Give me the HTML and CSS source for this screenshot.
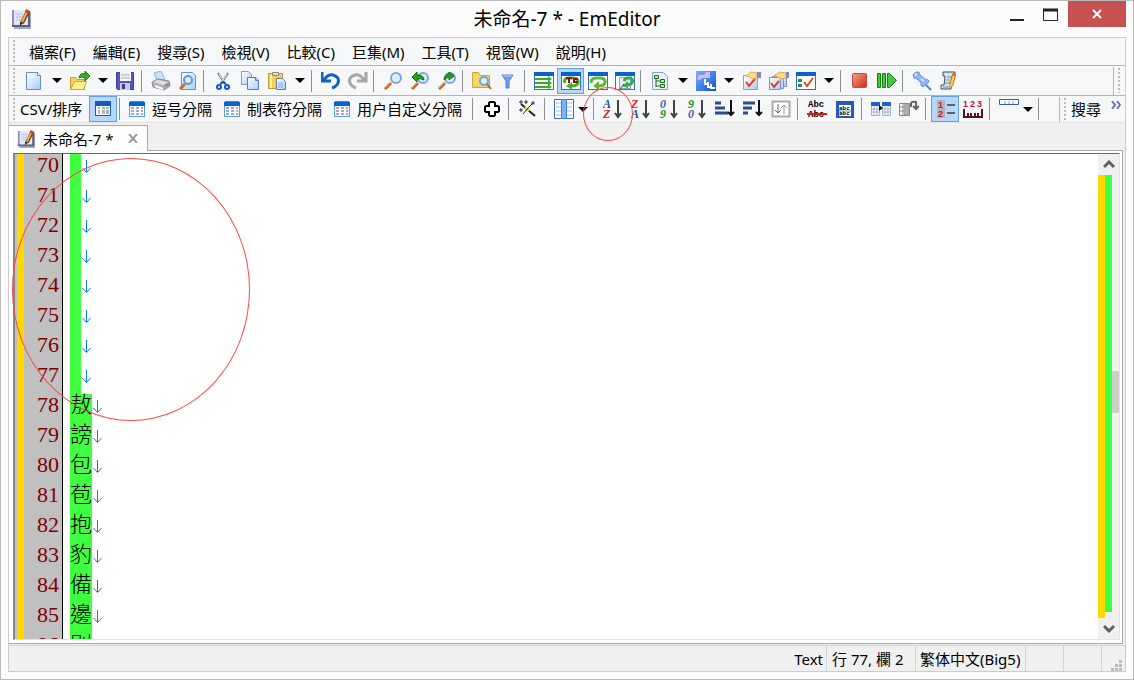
FILE: index.html
```
<!DOCTYPE html>
<html lang="zh-Hant">
<head>
  <meta charset="UTF-8">
  <meta name="viewport" content="width=device-width, initial-scale=1.0">
  <title>未命名-7 * - EmEditor</title>
  <link rel="stylesheet" href="styles.css">
</head>
<body>
  <!-- shared symbols -->
  <svg class="defs" aria-hidden="true">
    <defs>
      <linearGradient id="paper" x1="0" y1="0" x2="1" y2="1"><stop offset="0" stop-color="#fff"/><stop offset="1" stop-color="#a9ccf5"/></linearGradient>
      <linearGradient id="bluebox" x1="0" y1="0" x2="1" y2="1"><stop offset="0" stop-color="#7db2ff"/><stop offset="1" stop-color="#0d50dc"/></linearGradient>
      <linearGradient id="redbox" x1="0" y1="0" x2="1" y2="1"><stop offset="0" stop-color="#f3a18c"/><stop offset="1" stop-color="#cf2a10"/></linearGradient>
    </defs>
    <symbol id="note" viewBox="0 0 20 20">
      <path d="M3 3h17v17H3z" fill="#a5a5ad"/>
      <path d="M1 1h16v17H1z" fill="#e4e6fa"/>
      <path d="M2 1v17" stroke="#8f8fc4" stroke-width="2"/>
      <path d="M1 17h17V2" fill="none" stroke="#5c5c90" stroke-width="2"/>
      <path d="M5 5h7M5 8h6M5 11h5" stroke="#b9bee2"/>
      <path d="M17 2l-6 12" stroke="#7a4418" stroke-width="4"/>
      <path d="M16 3l-5 10" stroke="#f5b43c" stroke-width="2"/>
      <path d="M15 0l4 2-1 3-4-2z" fill="#c8402c"/>
      <path d="M9 13l3 1-3 3z" fill="#222"/>
    </symbol>
    <symbol id="table" viewBox="0 0 16 16">
      <path d="M0 1h16v15H0z" fill="#5f9be0"/>
      <path d="M1 5h14v10H1z" fill="#f4f9ff"/>
      <path d="M0 1h16v4H0z" fill="#0a62d0"/>
      <path d="M1 0h14v1H1z" fill="#2f86e4"/>
      <path d="M2 6h3v2H2zM7 6h3v2H7zM12 6h2v2h-2zM2 9h3v2H2zM7 9h3v2H7zM12 9h2v2h-2zM2 12h3v2H2zM7 12h3v2H7zM12 12h2v2h-2z" fill="#a8acb6"/>
    </symbol>
    <symbol id="lens" viewBox="0 0 20 20">
      <path d="M2 18l6-6" stroke="#b8682c" stroke-width="3"/>
      <path d="M2 17l6-6" stroke="#f0a060"/>
      <circle cx="13" cy="7" r="5" fill="#d8efff" stroke="#7ba7d8" stroke-width="2"/>
      <path d="M10 6q1-2 3-2" stroke="#fff" fill="none"/>
    </symbol>
    <symbol id="win" viewBox="0 0 20 20">
      <path d="M0 1h20v18H0z" fill="#2f74c8"/>
      <path d="M0 1h20v4H0z" fill="#0a60cc"/>
      <path d="M1 5h18v13H1z" fill="#fff"/>
    </symbol>
    <symbol id="down" viewBox="0 0 10 5"><path d="M0 0h10L5 5z"/></symbol>
    <symbol id="eol" viewBox="0 0 9 13"><path d="M4.500 0v12M.5 8l4 4.500 4-4.500" fill="none" stroke="#0a80f0"/></symbol>
  </svg>

  <header class="titlebar">
    <svg class="app-icon"><use href="#note"/></svg>
    <h1>未命名-7 * - EmEditor</h1>
    <div class="window-buttons">
      <button aria-label="最小化"><svg width="16" height="16"><path d="M1 14h14" stroke="#222" stroke-width="2"/></svg></button>
      <button aria-label="最大化"><svg width="16" height="16"><path d="M.5 3.500h14v11H.5z" fill="none" stroke="#222"/><path d="M0 4h15" stroke="#222" stroke-width="3"/></svg></button>
      <button class="close" aria-label="關閉"><svg width="12" height="10"><path d="M2 1l8 8M10 1L2 9" stroke="#fff" stroke-width="2"/></svg></button>
    </div>
  </header>

  <main class="frame">
    <nav class="bar menubar">
      <span class="grip"></span>
      <button>檔案(F)</button>
      <button>編輯(E)</button>
      <button>搜尋(S)</button>
      <button>檢視(V)</button>
      <button>比較(C)</button>
      <button>巨集(M)</button>
      <button>工具(T)</button>
      <button>視窗(W)</button>
      <button>說明(H)</button>
    </nav>

    <div class="bar toolbar" role="toolbar" aria-label="標準">
      <span class="grip"></span>
      <button aria-label="新增"><svg viewBox="0 0 20 20"><path d="M2.500 1.500h11l3 3v14h-14z" fill="url(#paper)" stroke="#6c8cc8"/><path d="M13.500 1.500v3h3" fill="#fff" stroke="#6c8cc8"/></svg></button>
      <button class="more" aria-label="新增選項"><svg><use href="#down"/></svg></button>
      <button aria-label="開啟"><svg viewBox="0 0 20 20"><path d="M.5 18.500v-12h5l2 2h7v10z" fill="#f3d060" stroke="#c89a30"/><path d="M.5 18.500l4-8h12l-3 8z" fill="#fff08a" stroke="#d0a438"/><path d="M9 7q1-6 6-4V0l5 5-5 5V7q-3-2-6 0z" fill="#3fae2c" stroke="#1c7c10"/></svg></button>
      <button class="more" aria-label="最近的檔案"><svg><use href="#down"/></svg></button>
      <button aria-label="儲存"><svg viewBox="0 0 20 20"><path d="M.5 1.500h17v17h-16l-1-1z" fill="#5555c0" stroke="#40409c"/><path d="M4 1h11v9H4z" fill="#f4f4f4"/><path d="M5 4h9M5 7h9" stroke="#aaa"/><path d="M4 12h10v7H4z" fill="#c9c9d8"/><path d="M6 13h3v5H6z" fill="#3a3a90"/></svg></button>
      <span class="sep"></span>
      <button aria-label="列印"><svg viewBox="0 0 20 20"><path d="M3 2l7-2 4 8-8 2z" fill="#c8e2fb" stroke="#8db2dc"/><path d="M1 11l6-3 11 2 1 5-6 4-11-3z" fill="#b0b0b0" stroke="#8c8c8c"/><path d="M2 11l5-2 10 2-5 3z" fill="#e0e0e0"/><path d="M4 15l8 3" stroke="#fff" stroke-width="2"/><path d="M14 15l4-2" stroke="#666"/></svg></button>
      <button aria-label="預覽列印"><svg viewBox="0 0 20 20"><path d="M3.500 1.500h11l3 3v14h-14z" fill="url(#paper)" stroke="#6c90d0"/><path d="M2 18l5-5" stroke="#c0703a" stroke-width="3"/><circle cx="10" cy="9" r="4" fill="#d2eeff" stroke="#6597d0" stroke-width="2"/></svg></button>
      <span class="sep"></span>
      <button aria-label="剪下"><svg viewBox="0 0 20 20"><path d="M5 2l7 11M15 2L8 13" stroke="#66788c" stroke-width="2"/><path d="M6 3l5 8M14 3l-5 8" stroke="#dde4ea"/><circle cx="6" cy="16" r="2" fill="none" stroke="#1656b8" stroke-width="2"/><circle cx="14" cy="16" r="2" fill="none" stroke="#1656b8" stroke-width="2"/><path d="M7 13l3-2 3 2" stroke="#1656b8" stroke-width="2" fill="none"/></svg></button>
      <button aria-label="複製"><svg viewBox="0 0 20 20"><path d="M1.500.5h7l3 3v10h-10z" fill="url(#paper)" stroke="#7c9cd4"/><path d="M7.500 6.500h8l3 3v9h-11z" fill="url(#paper)" stroke="#6078bc"/><path d="M15.500 6.500v3h3" fill="none" stroke="#6078bc"/></svg></button>
      <button aria-label="貼上"><svg viewBox="0 0 20 20"><path d="M1.500 2.500h14v15h-14z" fill="#f6d04c" stroke="#c09a30"/><path d="M3 4h2v13H3z" fill="#fff0a0"/><path d="M5.500 1.500h6v3h-6z" fill="#ddd" stroke="#888"/><path d="M9.500 7.500h6l3 3v8h-9z" fill="url(#paper)" stroke="#6078bc"/><path d="M11 12h5M11 14h5M11 16h5" stroke="#85aee0"/></svg></button>
      <button class="more" aria-label="貼上選項"><svg><use href="#down"/></svg></button>
      <span class="sep"></span>
      <button aria-label="復原"><svg viewBox="0 0 20 20"><path d="M1 1v9h9M3 9q4-6 9-5 7 2 5 8-1 3-6 5" fill="none" stroke="#1262c4" stroke-width="3"/></svg></button>
      <button aria-label="取消復原"><svg viewBox="0 0 20 20"><path d="M18 1v9H9M16 9q-4-6-9-5-7 2-5 8 1 3 6 5" fill="none" stroke="#a6a6a6" stroke-width="3"/></svg></button>
      <span class="sep"></span>
      <button aria-label="尋找"><svg><use href="#lens"/></svg></button>
      <button aria-label="尋找上一個"><svg viewBox="0 0 20 20"><use href="#lens" width="20" height="20"/><path d="M2 6l5-5v3q7 0 7 5-3-2-7-1v3z" fill="#28a020" stroke="#0e6c0c"/></svg></button>
      <button aria-label="尋找下一個"><svg viewBox="0 0 20 20"><use href="#lens" width="20" height="20"/><path d="M7 9q0-5 5-6V1l5 4-5 4V6q-3 1-5 3z" fill="#28a020" stroke="#0e6c0c"/></svg></button>
      <span class="sep"></span>
      <button aria-label="在檔案中尋找"><svg viewBox="0 0 20 20"><path d="M.5 16.500v-15h6l2 3h9v12z" fill="#f6d468" stroke="#d0a43c"/><circle cx="12" cy="10" r="4" fill="#d8f0ff" stroke="#7aa4d4" stroke-width="2"/><path d="M15 13l4 5" stroke="#b8682c" stroke-width="2"/></svg></button>
      <button aria-label="篩選"><svg viewBox="0 0 20 20"><path d="M3 4h11l-4 6v7H7v-7z" fill="#6f9cf0" stroke="#5080d8"/><path d="M4 5h9" stroke="#b9d2ff"/></svg></button>
      <span class="sep"></span>
      <button aria-label="不換行"><svg viewBox="0 0 20 20"><use href="#win" width="20" height="20"/><path d="M1 8h14M1 12h14M1 16h14" stroke="#3cac28" stroke-width="2"/><path d="M14 5l4 3-4 3zM14 9l4 3-4 3zM14 13l4 3-4 2z" fill="#3cac28"/></svg></button>
      <button class="on" aria-label="依字數換行"><svg viewBox="0 0 20 20"><use href="#win" width="20" height="20"/><path d="M4 12q-2-5 4-5h5q5 1 4 5-1 3-6 3" fill="none" stroke="#44b420" stroke-width="3"/><path d="M11 11v8l-6-4z" fill="#44b420"/><path d="M5 6h6v2H9v4H7V8H5zM12 7h5v2h-3v1h3v2h-5z" fill="#8c1020"/></svg></button>
      <button aria-label="依視窗換行"><svg viewBox="0 0 20 20"><use href="#win" width="20" height="20"/><path d="M3 12q0-5 5-5h5q5 1 4 5-1 3-6 3" fill="none" stroke="#58bc30" stroke-width="3"/><path d="M11 10v9l-6-4z" fill="#58bc30"/></svg></button>
      <button aria-label="依頁面換行"><svg viewBox="0 0 20 20"><use href="#win" width="20" height="20"/><path d="M4.500 6.500h11v11h-11z" fill="#e6eefc" stroke="#90a4cc"/><path d="M9 10q1-3 4-3h3q3 3 0 6l-3 1" fill="none" stroke="#3ca848" stroke-width="3"/><path d="M13 10v7l-6-2z" fill="#3ca848"/><path d="M5 18l4-5" stroke="#444"/></svg></button>
      <span class="sep"></span>
      <button aria-label="大綱"><svg viewBox="0 0 20 20"><path d="M2.500 1.500h11l4 4v13h-15z" fill="#e8f0fa" stroke="#8ca0c4"/><path d="M6 5v11M6 10h4M6 15h4" stroke="#1c6c1c"/><path d="M4.500 4.500h4v3h-4zM10.500 8.500h4v3h-4zM10.500 13.500h4v3h-4z" fill="#b5f09c" stroke="#1c6c1c"/></svg></button>
      <button class="more" aria-label="大綱選項"><svg><use href="#down"/></svg></button>
      <button aria-label="外掛程式"><svg viewBox="0 0 20 20"><path d="M0 0h20v20H0z" fill="url(#bluebox)"/><path d="M1 8l2-4h5l2-3h4v6H6L4 9z" fill="#d9b8f4"/><path d="M9 8v5h3M12 11v5h3M15 13v4h4" stroke="#fff" stroke-width="2" fill="none"/></svg></button>
      <button class="more" aria-label="外掛程式選項"><svg><use href="#down"/></svg></button>
      <button aria-label="工具內容"><svg viewBox="0 0 20 20"><path d="M1.500 4.500h14v14h-14z" fill="url(#paper)" stroke="#8ca0dc"/><path d="M4 11l3 4 6-7" stroke="#e04020" stroke-width="2" fill="none"/><path d="M4 5l5-4 6 1v5l-4 1-3-2z" fill="#ffdc8c" stroke="#dcac50"/><path d="M15 1h4v6h-4z" fill="#8088d8"/></svg></button>
      <button aria-label="所有設定內容"><svg viewBox="0 0 20 20"><path d="M6.500 3.500h11v12h-11z" fill="url(#paper)" stroke="#7a90d0"/><path d="M3.500 5.500h11v12h-11z" fill="url(#paper)" stroke="#7a90d0"/><path d="M.5 6.500h11v12H.5z" fill="url(#paper)" stroke="#7a90d0"/><path d="M2 12l3 4 5-6" stroke="#e04020" stroke-width="2" fill="none"/><path d="M5 5l6-4 6 1v5l-5 1-3-2z" fill="#ffdc8c" stroke="#dcac50"/><path d="M17 1h3v6h-3z" fill="#8088d8"/></svg></button>
      <button aria-label="自訂"><svg viewBox="0 0 20 20"><use href="#win" width="20" height="20"/><path d="M2 8h4v3H2zM2 13h4v3H2z" fill="#189848"/><path d="M8 11l3 4 6-8" stroke="#e84818" stroke-width="2" fill="none"/></svg></button>
      <button class="more" aria-label="自訂選項"><svg><use href="#down"/></svg></button>
      <span class="sep"></span>
      <button aria-label="停止錄製"><svg viewBox="0 0 20 20"><rect x="2.500" y="2.500" width="14" height="14" rx="1" fill="url(#redbox)" stroke="#d04830"/></svg></button>
      <button aria-label="執行巨集"><svg viewBox="0 0 20 20"><path d="M.5 2.500h3v14h-3zM5.500 2.500h3v14h-3zM10.500 2.500h2l7 7-7 7h-2z" fill="#46c83c" stroke="#0c840c"/></svg></button>
      <span class="sep"></span>
      <button aria-label="釘選"><svg viewBox="0 0 20 20"><path d="M12 12l7 7" stroke="#5a84d8" stroke-width="2"/><path d="M1 4q2-4 6-3l1 3 5 4q4 0 4 3l-6 5q-3-1-2-4L5 8Q1 8 1 4z" fill="#8fb4f8" stroke="#6a94e4"/><path d="M3 4l2-1M9 8l3 2" stroke="#dce8ff" stroke-width="2"/></svg></button>
      <button aria-label="巨集指令碼"><svg viewBox="0 0 20 20"><path d="M4 1h12v4h-3l-1 13H2v-4h3l1-9H4z" fill="#d4e6ea" stroke="#3c5058"/><path d="M8 6h4M7 9h4M6 12h5M4 16h7" stroke="#6c8890"/><path d="M15 4l-3 11" stroke="#c47818" stroke-width="4"/><path d="M15 4l-3 11" stroke="#ffd058" stroke-width="2"/><path d="M14 2l3 1-1 2-3-1z" fill="#e05030"/></svg></button>
      <span class="band-end"></span>
      <span class="grip"></span>
    </div>

    <div class="bar toolbar csv" role="toolbar" aria-label="CSV/排序">
      <span class="grip"></span>
      <span class="label">CSV/排序</span>
      <button class="on" aria-label="標準模式"><svg viewBox="0 0 20 20"><path d="M2 2h16v15H2z" fill="#1c58c0"/><path d="M3 7h14v9H3z" fill="#f4f8ff"/><path d="M5 9h2M9 9h3M13 9h3M5 12h2M9 12h3M13 12h3M5 14h2M9 14h3M13 14h3" stroke="#707078"/></svg></button>
      <span class="sep"></span>
      <button class="text"><svg><use href="#table"/></svg>逗号分隔</button>
      <button class="text"><svg><use href="#table"/></svg>制表符分隔</button>
      <button class="text"><svg><use href="#table"/></svg>用户自定义分隔</button>
      <span class="sep"></span>
      <button aria-label="選取範圍"><svg viewBox="0 0 20 20"><path d="M7 4l1-1h4l1 1v3h3l1 1v4l-1 1h-3v3l-1 1H8l-1-1v-3H4l-1-1V8l1-1h3z" fill="#fff" stroke="#000" stroke-width="2"/></svg></button>
      <span class="sep"></span>
      <button aria-label="調整分隔符"><svg viewBox="0 0 20 20"><path d="M3 5l14 12" stroke="#222" stroke-width="2"/><path d="M7 8l4 4" stroke="#e8dc30" stroke-width="2"/><path d="M3 1v4M1 3h4M8 1v4M6 3h4M15 2v4M13 4h4M3 9v4M1 11h4M5 15l5-6 5-5" stroke="#333"/></svg></button>
      <span class="sep"></span>
      <button aria-label="管理欄"><svg viewBox="0 0 20 20"><path d="M.5.5h19v19H.5z" fill="#fff" stroke="#3470b8"/><path d="M2 4h5M13 4h5M2 8h5M13 8h5M2 12h5M13 12h5M2 16h5M13 16h5" stroke="#a4bcdc"/><path d="M7 0h6v20H7z" fill="#4480e0"/><path d="M8 1h4v18H8z" fill="#7cb0fa"/></svg></button>
      <button class="more" aria-label="選取欄"><svg><use href="#down"/></svg></button>
      <span class="sep"></span>
      <button aria-label="由 A 到 Z 排序"><svg viewBox="0 0 20 20"><text x="0" y="9" fill="#1c5490">A</text><text x="0" y="19" fill="#c82838">Z</text><path d="M15 1v17M12 14l3 4 3-4" stroke="#444" stroke-width="2" fill="none"/></svg></button>
      <button aria-label="由 Z 到 A 排序"><svg viewBox="0 0 20 20"><text x="0" y="9" fill="#c82838">Z</text><text x="0" y="19" fill="#1c5490">A</text><path d="M15 1v17M12 14l3 4 3-4" stroke="#444" stroke-width="2" fill="none"/></svg></button>
      <button aria-label="由小到大排序"><svg viewBox="0 0 20 20"><text x="1" y="9" fill="#5450b0">0</text><text x="1" y="19" fill="#289020">9</text><path d="M15 1v17M12 14l3 4 3-4" stroke="#444" stroke-width="2" fill="none"/></svg></button>
      <button aria-label="由大到小排序"><svg viewBox="0 0 20 20"><text x="1" y="9" fill="#289020">9</text><text x="1" y="19" fill="#5450b0">0</text><path d="M15 1v17M12 14l3 4 3-4" stroke="#444" stroke-width="2" fill="none"/></svg></button>
      <button aria-label="由短到長排序"><svg viewBox="0 0 20 20"><path d="M0 4h6M0 9h10M0 14h13" stroke="#304c88" stroke-width="3"/><path d="M16 1v15M13 13l3 3 3-3" stroke="#111" stroke-width="2" fill="none"/></svg></button>
      <button aria-label="由長到短排序"><svg viewBox="0 0 20 20"><path d="M0 4h12M0 9h9M0 14h5" stroke="#304c88" stroke-width="3"/><path d="M16 1v15M13 13l3 3 3-3" stroke="#111" stroke-width="2" fill="none"/></svg></button>
      <button aria-label="反轉順序"><svg viewBox="0 0 20 20"><path d="M1.500 2.500h17v15h-17z" fill="#fff" stroke="#aaa" stroke-width="2"/><path d="M7 5v9M4 11l3 3 3-3" stroke="#666" fill="none"/><path d="M13 15V6M10 9l3-3 3 3" stroke="#999" fill="none"/></svg></button>
      <span class="sep"></span>
      <button aria-label="刪除重複的行"><svg class="abc" viewBox="0 0 20 20"><text x="1" y="8">Abc</text><text x="1" y="18">Abc</text><path d="M0 15h20" stroke="#e81010" stroke-width="2"/></svg></button>
      <button aria-label="書籤重複的行"><svg class="abc small" viewBox="0 0 20 20"><path d="M1 2h18v17H1z" fill="#2458c0"/><path d="M4 6h12v11H4z" fill="#fff"/><text x="4" y="11">abc</text><text x="4" y="16">abc</text><path d="M4 12h12" stroke="#38a8d8"/></svg></button>
      <span class="sep"></span>
      <button aria-label="合併 CSV"><svg viewBox="0 0 20 20"><path d="M.5 3.500h8v13h-8zM11.500 3.500h8v13h-8z" fill="#fff" stroke="#98b4dc"/><path d="M0 3h9v4H0zM11 3h9v4h-9z" fill="#1c60c8"/><path d="M1 10h7M1 13h7M12 10h7M12 13h7M3 7v9M6 7v9M14 7v9M17 7v9" stroke="#a0acd0"/><path d="M8 6l4 3-4 3z" fill="#111"/></svg></button>
      <button aria-label="轉換 CSV"><svg viewBox="0 0 20 20"><path d="M.5 4.500h10v12H.5z" fill="#fff" stroke="#888"/><path d="M0 8h11M0 12h11M4 4v12" stroke="#888"/><path d="M5 5h5v11H5z" fill="#aaa"/><path d="M12 8V4q1-2 5-1v6M14 7l3 3 3-3" fill="none" stroke="#666" stroke-width="2"/></svg></button>
      <span class="sep"></span>
      <button class="on" aria-label="行號"><svg class="num" viewBox="0 0 20 20"><path d="M2 1h8v18H2z" fill="#b8b0b4"/><text x="3" y="9">1</text><text x="3" y="18">2</text><path d="M12 6h8M12 14h8" stroke="#606068" stroke-width="2"/></svg></button>
      <button aria-label="尺規"><svg class="num" viewBox="0 0 20 20"><text x="0" y="8">1</text><text x="7" y="8">2</text><text x="14" y="8">3</text><path d="M1 10v8h18v-8M5 14v4M8 14v4M12 14v4M15 14v4" fill="none" stroke="#601018" stroke-width="2"/></svg></button>
      <span class="sep"></span>
      <button aria-label="標題列"><svg viewBox="0 0 20 20"><path d="M.5.5h19v5H.5z" fill="#fff" stroke="#2c60c0"/><path d="M6 2v3M10 2v3M14 2v3" stroke="#8098c0"/></svg></button>
      <button class="more" aria-label="標題選項"><svg><use href="#down"/></svg></button>
      <span class="sep"></span>
      <span class="band-end"></span>
      <span class="grip"></span>
      <button class="search">搜尋</button>
      <button class="chevron" aria-label="更多"><svg viewBox="0 0 10 8"><path d="M1 0l3 4-3 4M6 0l3 4-3 4" fill="none" stroke="#7070b8" stroke-width="2"/></svg></button>
    </div>

    <div class="tabs">
      <div class="tab">
        <svg class="tab-icon"><use href="#note"/></svg>
        <a href="#doc">未命名-7 *</a>
        <button aria-label="關閉索引標籤"><svg width="10" height="9"><path d="M1 0l8 9M9 0L1 9" stroke="#999" stroke-width="2"/></svg></button>
      </div>
    </div>

    <section class="pane">
      <div class="editor">
        <div class="lines" id="doc">
          <div class="line"><span class="no">70</span><span class="sel"></span><svg><use href="#eol"/></svg></div>
          <div class="line"><span class="no">71</span><span class="sel"></span><svg><use href="#eol"/></svg></div>
          <div class="line"><span class="no">72</span><span class="sel"></span><svg><use href="#eol"/></svg></div>
          <div class="line"><span class="no">73</span><span class="sel"></span><svg><use href="#eol"/></svg></div>
          <div class="line"><span class="no">74</span><span class="sel"></span><svg><use href="#eol"/></svg></div>
          <div class="line"><span class="no">75</span><span class="sel"></span><svg><use href="#eol"/></svg></div>
          <div class="line"><span class="no">76</span><span class="sel"></span><svg><use href="#eol"/></svg></div>
          <div class="line"><span class="no">77</span><span class="sel"></span><svg><use href="#eol"/></svg></div>
          <div class="line"><span class="no">78</span><span class="sel">敖</span><svg><use href="#eol"/></svg></div>
          <div class="line"><span class="no">79</span><span class="sel">謗</span><svg><use href="#eol"/></svg></div>
          <div class="line"><span class="no">80</span><span class="sel">包</span><svg><use href="#eol"/></svg></div>
          <div class="line"><span class="no">81</span><span class="sel">苞</span><svg><use href="#eol"/></svg></div>
          <div class="line"><span class="no">82</span><span class="sel">抱</span><svg><use href="#eol"/></svg></div>
          <div class="line"><span class="no">83</span><span class="sel">豹</span><svg><use href="#eol"/></svg></div>
          <div class="line"><span class="no">84</span><span class="sel">備</span><svg><use href="#eol"/></svg></div>
          <div class="line"><span class="no">85</span><span class="sel">邊</span><svg><use href="#eol"/></svg></div>
          <div class="line"><span class="no">86</span><span class="sel">別</span><svg><use href="#eol"/></svg></div>
        </div>
        <div class="scrollbar">
          <button aria-label="向上捲動"><svg width="12" height="9"><path d="M1 7l5-5 5 5" fill="none" stroke="#606060" stroke-width="3"/></svg></button>
          <div class="track">
            <span class="changed"></span>
            <span class="selected"></span>
            <span class="thumb"></span>
          </div>
          <button aria-label="向下捲動"><svg width="12" height="9"><path d="M1 2l5 5 5-5" fill="none" stroke="#606060" stroke-width="3"/></svg></button>
        </div>
      </div>
    </section>

    <footer class="status">
      <span>Text</span>
      <span class="pos">行 77, 欄 2</span>
      <span class="enc">繁体中文(Big5)</span>
      <span class="empty"></span>
      <span class="empty"></span>
      <span class="size"><svg width="11" height="11"><path d="M8 0h3v3H8zM4 4h3v3H4zM8 4h3v3H8zM0 8h3v3H0zM4 8h3v3H4zM8 8h3v3H8z" fill="#bbb"/></svg></span>
    </footer>
  </main>

  <div class="mark mark-sort"></div>
  <div class="mark mark-lines"></div>
</body>
</html>
```
FILE: styles.css
```
* {
  box-sizing: border-box;
}
body {
  position: relative;
  display: flex;
  flex-direction: column;
  height: 100vh;
  margin: 0;
  padding: 0 7px 7px;
  border: 1px solid #bbb;
  background: #fcfcfc;
  color: #000;
  font: 15px/20px "Noto Sans", "Noto Sans CJK TC", sans-serif;
  overflow: hidden;
}
button {
  display: flex;
  align-items: center;
  justify-content: center;
  margin: 0;
  padding: 0;
  border: 0;
  background: none;
  color: inherit;
  font: inherit;
  white-space: nowrap;
}
svg {
  display: block;
  flex: none;
}
.defs {
  position: absolute;
  width: 0;
  height: 0;
}

/* title bar */
.titlebar {
  display: grid;
  grid-template-columns: 1fr auto 1fr;
  height: 36px;
  flex: none;
}
.app-icon {
  width: 20px;
  height: 20px;
  margin: 8px 3px;
}
h1 {
  margin: 0;
  font-size: 19px;
  font-weight: 400;
  line-height: 36px;
}
.window-buttons {
  display: flex;
  justify-content: flex-end;
  height: 26px;
}
.window-buttons button {
  width: 34px;
}
.window-buttons .close {
  width: 58px;
  background: #c75050;
}

/* bars */
.frame {
  display: flex;
  flex-direction: column;
  flex: 1;
  min-height: 0;
  border: 1px solid #ccc;
  background: #f0f0f0;
}
.bar {
  display: flex;
  align-items: center;
  flex: none;
  background: #f5f7f9;
  border-bottom: 1px solid #b4b6b8;
}
.grip {
  flex: none;
  align-self: stretch;
  width: 2px;
  margin: 2px 5px 2px 4px;
  background: repeating-linear-gradient(#bbb 0 2px, transparent 2px 4px);
}
.menubar {
  height: 28px;
}
.menubar button {
  margin-left: 9px;
  margin-right: 8px;
}
.toolbar {
  height: 30px;
}
.toolbar button {
  width: 27px;
  height: 26px;
}
.toolbar svg {
  width: 20px;
  height: 20px;
}
.toolbar .more {
  width: 19px;
}
.toolbar .more svg {
  width: 10px;
  height: 5px;
}
.toolbar .on {
  background: #b5d7f8;
  border: 1px solid #62a2e4;
}
.sep {
  flex: none;
  width: 1px;
  height: 22px;
  margin: 0 5px 0 2px;
  background: #8c8e90;
}
.band-end {
  align-self: stretch;
  width: 1px;
  margin: 1px 0 0 auto;
  background: #b4b6b8;
}
.csv {
  height: 27px;
  border-bottom-color: #e4e4e4;
}
.csv button {
  width: 28px;
}
.csv .label {
  width: 69px;
}
.csv .text {
  width: auto;
  gap: 7px;
  padding: 0 8px 0 4px;
}
.csv .text svg {
  width: 16px;
  height: 16px;
}
.csv .more {
  width: 13px;
  justify-content: flex-start;
}
.csv .search {
  width: 30px;
}
.csv .chevron {
  width: 24px;
  height: 16px;
  padding-right: 4px;
  justify-content: flex-end;
}
.csv .chevron svg {
  width: 10px;
  height: 8px;
  margin-bottom: 8px;
}
.csv text {
  font: italic bold 12px "Liberation Serif", serif;
}
.csv .abc text {
  font: bold 9px "Liberation Mono", monospace;
}
.csv .small text {
  font-size: 6px;
}
.csv .num text {
  font: bold 9px "Liberation Sans", sans-serif;
  fill: #c01838;
}

/* tabs */
.tabs {
  display: flex;
  height: 27px;
  flex: none;
  padding-top: 2px;
}
.tab {
  display: flex;
  align-items: center;
  margin-bottom: -1px;
  padding: 0 9px 0 8px;
  border: 1px solid #aaa;
  border-width: 1px 1px 0 0;
  background: #fff;
  z-index: 1;
}
.tab-icon {
  width: 18px;
  height: 18px;
  margin-right: 8px;
}
.tab a {
  color: #000;
  text-decoration: none;
  white-space: nowrap;
  margin-right: 14px;
}

/* editor */
.pane {
  display: flex;
  flex: 1;
  min-height: 0;
  margin-right: 2px;
  padding: 2px 2px 3px 4px;
  border: 1px solid #a9a9a9;
  border-left: 0;
  background: #fff;
}
.editor {
  display: flex;
  flex: 1;
  border: 1px solid #e3e3e3;
  border-left: 2px solid #858585;
  border-top-color: #696969;
}
.lines {
  flex: 1;
  overflow: hidden;
  background: linear-gradient(90deg, #c0c0c0 2px, #ffd800 2px 9px, #c0c0c0 9px 47px, #000 47px 48px, #fff 48px);
}
.line {
  display: flex;
  height: 30px;
  font: 22px/22px "Liberation Serif", "Noto Sans CJK TC", serif;
}
.no {
  width: 44px;
  margin-right: 11px;
  text-align: right;
  color: #800000;
}
.sel {
  min-width: 11px;
  background: #40ff40;
  font-weight: 300;
}
.line svg {
  width: 9px;
  height: 13px;
  margin: 6px 1px;
}
.scrollbar {
  display: flex;
  flex-direction: column;
  width: 21px;
  background: #f0f0f0;
}
.scrollbar button {
  height: 21px;
}
.track {
  display: flex;
  flex: 1;
}
.track span {
  width: 7px;
}
.changed {
  background: #ffd800;
}
.selected {
  margin-bottom: 6px;
  background: #40ff40;
}
.thumb {
  height: 42px;
  margin-top: 196px;
  background: #cdcdcd;
}

/* status bar */
.status {
  display: flex;
  justify-content: flex-end;
  flex: none;
  height: 26px;
  margin-top: 1px;
  border-top: 1px solid #d4d4d4;
  line-height: 26px;
}
.status span {
  padding: 0 3px;
  white-space: nowrap;
}
.status span + span {
  border-left: 1px solid #d4d4d4;
}
.status .pos {
  width: 89px;
  padding-left: 5px;
}
.status .enc {
  width: 110px;
  padding-left: 4px;
}
.status .empty {
  width: 38px;
}
.status .size {
  display: flex;
  align-items: flex-end;
  justify-content: flex-end;
  width: 24px;
}

/* red marks drawn over the window */
.mark {
  position: absolute;
  border: 1px solid #ff4848;
  border-radius: 50%;
  pointer-events: none;
}
.mark-sort {
  left: 582px;
  top: 86px;
  width: 50px;
  height: 54px;
}
.mark-lines {
  left: 11px;
  top: 157px;
  width: 238px;
  height: 263px;
}
```
